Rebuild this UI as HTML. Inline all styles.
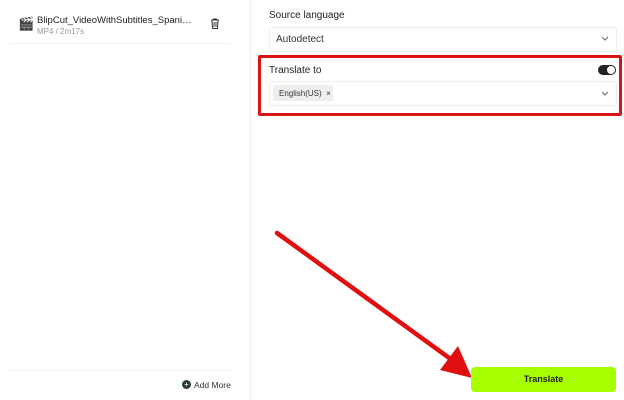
<!DOCTYPE html><html><head><style>
body{margin:0;width:624px;height:400px;background:#fff;font-family:"Liberation Sans",sans-serif;position:relative;overflow:hidden}
.a{position:absolute}
</style></head><body>
<div class="a" style="left:250px;top:0;width:1px;height:400px;background:#eee"></div>
<div class="a" style="left:18px;top:16px;font-size:13px">🎬</div>
<div class="a" style="left:37px;top:15px;width:158px;white-space:nowrap;overflow:hidden;text-overflow:ellipsis;font-size:9.5px;color:#222">BlipCut_VideoWithSubtitles_Spanish(English)</div>
<div class="a" style="left:37px;top:27px;font-size:8px;color:#999">MP4 / 2m17s</div>
<svg class="a" style="left:210px;top:18px" width="10" height="11" viewBox="0 0 10 11"><path d="M1 2h8M3.5 2V1h3v1M2 2.5l.5 8h5l.5-8M4 4v5M6 4v5" stroke="#333" fill="none" stroke-width="1"/></svg>
<div class="a" style="left:10px;top:43px;width:220px;height:1px;background:#f3f3f3"></div>
<div class="a" style="left:10px;top:370px;width:220px;height:1px;background:#f3f3f3"></div>
<div class="a" style="left:182px;top:380px;width:9px;height:9px;border-radius:50%;background:#2d3a30;color:#fff;font-size:8px;line-height:9px;text-align:center">+</div>
<div class="a" style="left:194px;top:380px;font-size:8.5px;color:#333">Add More</div>
<div class="a" style="left:269px;top:10px;font-size:10px;color:#222">Source language</div>
<div class="a" style="left:269px;top:27px;width:346px;height:23px;border:1px solid #eee;border-radius:3px"></div>
<div class="a" style="left:276px;top:34px;font-size:10px;color:#333">Autodetect</div>
<svg class="a" style="left:601px;top:36px" width="8" height="5"><path d="M1 1l3 3 3-3" stroke="#666" fill="none"/></svg>
<div class="a" style="left:258px;top:55px;width:358px;height:55px;border:3px solid #d81414;border-radius:2px"></div>
<div class="a" style="left:269px;top:65px;font-size:10px;color:#222">Translate to</div>
<div class="a" style="left:598px;top:65px;width:18px;height:10px;border-radius:5px;background:#222"></div>
<div class="a" style="left:607px;top:66px;width:8px;height:8px;border-radius:50%;background:#fff"></div>
<div class="a" style="left:269px;top:81px;width:346px;height:23px;border:1px solid #eee;border-radius:3px"></div>
<div class="a" style="left:273px;top:85px;width:60px;height:16px;background:#eee;border-radius:2px"></div>
<div class="a" style="left:279px;top:89px;font-size:8px;color:#333">English(US) &nbsp;×</div>
<svg class="a" style="left:601px;top:91px" width="8" height="5"><path d="M1 1l3 3 3-3" stroke="#666" fill="none"/></svg>
<svg class="a" style="left:0;top:0" width="624" height="400"><line x1="277" y1="233" x2="452" y2="360" stroke="#e01010" stroke-width="4.5" stroke-linecap="round"/><polygon points="472,378 440,370 458,346" fill="#e01010"/></svg>
<div class="a" style="left:471px;top:367px;width:145px;height:25px;background:#a6ff00;border-radius:4px;font-size:9px;font-weight:bold;line-height:25px;text-align:center;color:#222">Translate</div>
</body></html>
